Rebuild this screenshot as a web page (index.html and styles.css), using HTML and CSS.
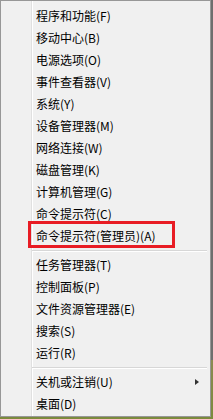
FILE: index.html
```html
<!DOCTYPE html>
<html lang="zh-CN">
<head>
    <meta charset="UTF-8">
    <title>快速链接菜单</title>
    <link rel="stylesheet" href="styles.css">
</head>
<body>
    <div class="menu">
        <div class="item">程序和功能(F)</div>
        <div class="item">移动中心(B)</div>
        <div class="item">电源选项(O)</div>
        <div class="item">事件查看器(V)</div>
        <div class="item">系统(Y)</div>
        <div class="item">设备管理器(M)</div>
        <div class="item">网络连接(W)</div>
        <div class="item">磁盘管理(K)</div>
        <div class="item">计算机管理(G)</div>
        <div class="item">命令提示符(C)</div>
        <div class="item">命令提示符(管理员)(A)</div>
        <div class="sep"></div>
        <div class="item">任务管理器(T)</div>
        <div class="item">控制面板(P)</div>
        <div class="item">文件资源管理器(E)</div>
        <div class="item">搜索(S)</div>
        <div class="item">运行(R)</div>
        <div class="sep"></div>
        <div class="item has-sub">关机或注销(U)<span class="arrow"></span></div>
        <div class="item">桌面(D)</div>

        <!-- red highlight round the admin prompt -->
        <div class="mark"></div>
    </div>
</body>
</html>
```

FILE: styles.css
```css
body {
    margin: 0;
    padding: 0;
    width: 213px;
    height: 419px;
    overflow: hidden;
    background: linear-gradient(to bottom, #6e6e6e 0, #6e6e6e 360px, #8a8a52 360px, #7b8a3c 419px);
    font-family: "Noto Sans CJK SC", "Liberation Sans", sans-serif;
}
.menu {
    position: relative;
    box-sizing: border-box;
    width: 211px;
    height: 417px;
    padding: 4px 0 1px 0;
    border: 1px solid #979797;
    background: linear-gradient(to right, #f0f0f0 30px, #e0e0e0 30px, #e0e0e0 31px, #ffffff 31px, #ffffff 32px, #f0f0f0 32px);
}
.item {
    position: relative;
    height: 22px;
    line-height: 22px;
    padding-left: 35px;
    font-size: 12px;
    color: #000;
    white-space: nowrap;
}
.sep {
    height: 7px;
    margin: 0 3px 0 31px;
    box-sizing: border-box;
    border-bottom: 3px solid transparent;
    position: relative;
}
.sep::after {
    content: "";
    position: absolute;
    left: 0;
    right: 0;
    top: 3px;
    height: 1px;
    background: #d7d7d7;
    border-bottom: 1px solid #ffffff;
}
.arrow {
    position: absolute;
    left: 194px;
    top: 8px;
    width: 0;
    height: 0;
    border-top: 3.5px solid transparent;
    border-bottom: 3.5px solid transparent;
    border-left: 4px solid #333;
}
.mark {
    position: absolute;
    left: 27px;
    top: 220px;
    width: 141px;
    height: 21px;
    border: 3px solid #e81c24;
}
```
